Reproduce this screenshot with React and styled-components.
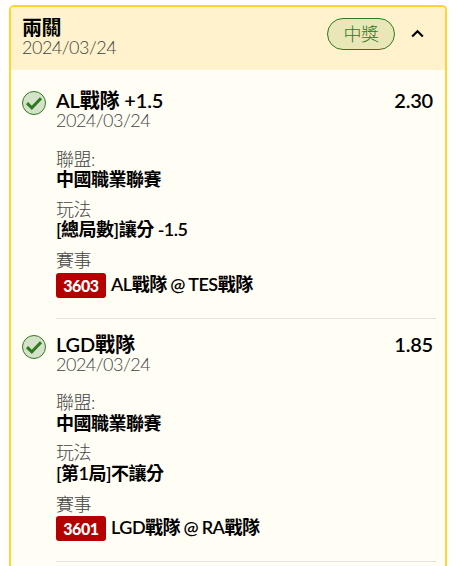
import React from "react";
import styled, { createGlobalStyle } from "styled-components";

const GlobalStyle = createGlobalStyle`
  * { box-sizing: border-box; }
  html, body { margin: 0; background: #fff; }
  body {
    height: 566px;
    overflow: hidden;
    color: #000;
    font-family: Lato, "Noto Sans CJK TC", sans-serif;
  }
`;

const Card = styled.section`
  width: 438px;
  height: 561px;
  margin: 5px 0 0 9px;
  border: 2px solid #ffd52e;
  border-bottom: 0;
  border-radius: 5px 5px 0 0;
  background: #fffdf4;
  overflow: hidden;
`;

const Header = styled.header`
  display: flex;
  align-items: flex-start;
  height: 63px;
  padding: 11px 21px 0 11px;
  background: #fff2cc;
`;

const Heading = styled.div`
  flex: 1;
  min-width: 0;
`;

const HeaderHeading = styled(Heading)`
  margin-top: -1px;
`;

const Title = styled.div`
  height: 20px;
  line-height: 20px;
  font-size: 20px;
  font-weight: ${(p) => (p.$bold ? 700 : 600)};
  letter-spacing: ${(p) => (p.$bold ? "-0.5px" : "-0.15px")};
  white-space: nowrap;
`;

const DateText = styled.div`
  height: 20px;
  line-height: 20px;
  font-size: 18px;
  font-weight: 300;
  letter-spacing: -0.5px;
  color: #444;
`;

const Status = styled.span`
  width: 68px;
  height: 32px;
  border: 1px solid #2f7a1f;
  border-radius: 16px;
  background: #e9e6b8;
  color: #2f7a1f;
  font-size: 18px;
  font-weight: 300;
  line-height: 30px;
  text-align: center;
  letter-spacing: -0.5px;
`;

const Toggle = styled.button`
  display: flex;
  margin: 11px 0 0 16px;
  padding: 0;
  border: 0;
  background: none;
  color: #000;
`;

const List = styled.div`
  padding: 5.3px 9px 0 11px;
`;

const Item = styled.article`
  display: flex;
  gap: 10px;
  height: 243.4px;
  padding-top: 15px;
`;

const Content = styled.div`
  flex: 1;
  border-bottom: 1px solid #e3e1da;
`;

const TopRow = styled.div`
  display: flex;
  padding-right: 3px;
  margin-bottom: 18.3px;
`;

const Odds = styled.div`
  height: 20px;
  line-height: 20px;
  font-size: 20px;
  font-weight: 600;
  letter-spacing: -0.2px;
`;

const Field = styled.div`
  margin-bottom: ${(p) => p.$gap || 0}px;
  font-size: 18px;
  line-height: 20px;
  letter-spacing: -0.5px;
  white-space: nowrap;
`;

const Label = styled.div`
  height: 20.6px;
  font-weight: 300;
  color: #444;
`;

const Value = styled.div`
  height: 20px;
  font-weight: 600;
`;

const Match = styled.div`
  display: flex;
  gap: 5px;
  margin-top: 2px;
  font-weight: 600;
  line-height: 23px;
  word-spacing: -0.5px;
`;

const Badge = styled.span`
  width: 50px;
  height: 25px;
  border-radius: 3px;
  background: #b50000;
  color: #fff;
  font-size: 16px;
  font-weight: 900;
  line-height: 26px;
  letter-spacing: -0.4px;
  text-align: center;
`;

const CheckIcon = styled.svg`
  flex: none;
  width: 24px;
  height: 24px;
  margin-top: 1px;
`;

const bets = [
  { name: "AL戰隊 +1.5", odds: "2.30", play: "[總局數]讓分 -1.5", id: "3603", match: "AL戰隊 @ TES戰隊" },
  { name: "LGD戰隊", odds: "1.85", play: "[第1局]不讓分", id: "3601", match: "LGD戰隊 @ RA戰隊" },
];

function Won() {
  return (
    <CheckIcon viewBox="0 0 24 24" fill="none" aria-hidden="true">
      <circle cx="12" cy="12" r="11.5" fill="#d5e2ca" stroke="#2f7a1f" />
      <path d="M5 12.2 9.8 16.8 19 7.2" stroke="#2f7a1f" strokeWidth="3" />
    </CheckIcon>
  );
}

function Bet({ bet }) {
  return (
    <Item>
      <Won />
      <Content>
        <TopRow>
          <Heading>
            <Title>{bet.name}</Title>
            <DateText>2024/03/24</DateText>
          </Heading>
          <Odds>{bet.odds}</Odds>
        </TopRow>
        <Field $gap={9.6}>
          <Label>聯盟:</Label>
          <Value>中國職業聯賽</Value>
        </Field>
        <Field $gap={11}>
          <Label>玩法</Label>
          <Value>{bet.play}</Value>
        </Field>
        <Field>
          <Label>賽事</Label>
          <Match>
            <Badge>{bet.id}</Badge>
            <span>{bet.match}</span>
          </Match>
        </Field>
      </Content>
    </Item>
  );
}

export default function App() {
  return (
    <>
      <GlobalStyle />
      <Card>
        <Header>
          <HeaderHeading>
            <Title $bold>兩關</Title>
            <DateText>2024/03/24</DateText>
          </HeaderHeading>
          <Status>中獎</Status>
          <Toggle aria-label="收合">
            <svg width="13" height="9" viewBox="0 0 13 9" fill="none">
              <path d="M1.2 7.5 6.5 2.3 11.8 7.5" stroke="currentColor" strokeWidth="2.2" />
            </svg>
          </Toggle>
        </Header>
        <List>
          {bets.map((bet) => (
            <Bet key={bet.id} bet={bet} />
          ))}
        </List>
      </Card>
    </>
  );
}
